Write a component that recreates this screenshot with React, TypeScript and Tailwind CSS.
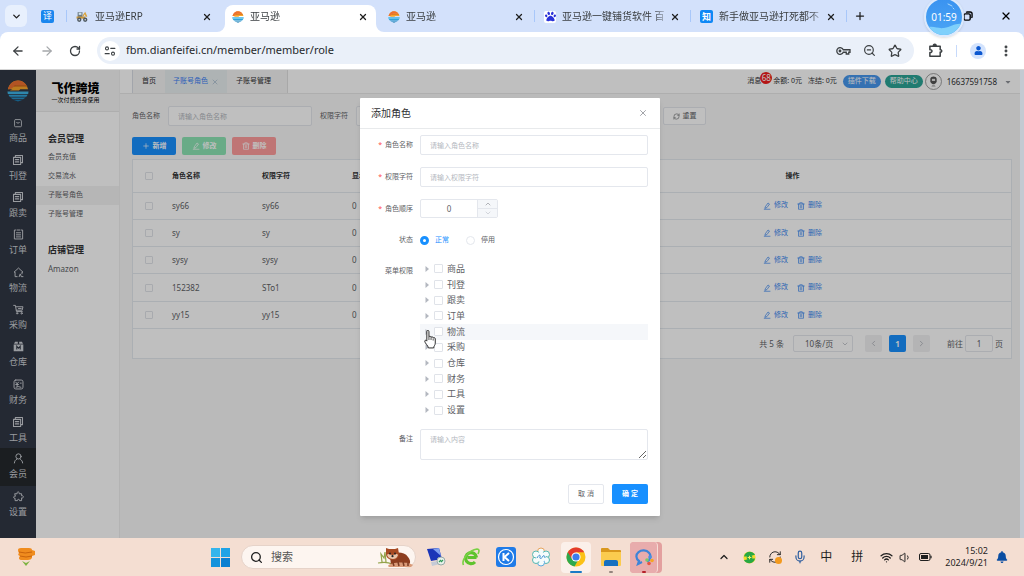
import { useState, type ReactNode } from 'react'
import {
  ArrowLeft,
  ArrowRight,
  ChevronDown,
  ChevronLeft,
  ChevronRight,
  ChevronUp,
  EllipsisVertical,
  Mic,
  Plus,
  RefreshCw,
  RotateCw,
  Search,
  Star,
  Volume1,
  Wifi,
  X,
  ZoomOut,
} from 'lucide-react'
import { FaBell, FaCaretDown, FaPaw, FaUser } from 'react-icons/fa'

type IconProps = { className?: string }

const Line = ({ className, children }: IconProps & { children: ReactNode }) => (
  <svg
    viewBox="0 0 16 16"
    className={className}
    fill="none"
    stroke="currentColor"
    strokeWidth="1.4"
    strokeLinecap="round"
    strokeLinejoin="round"
    aria-hidden="true"
  >
    {children}
  </svg>
)

const BrandIcon = ({ className }: IconProps) => (
  <svg viewBox="0 0 24 24" className={className} aria-hidden="true">
    <path d="M1 10C2.500 4 7 .5 12 .5S21.500 4 23 10h-8.500l-1.500 1.500H3l3-1.500z" fill="#f7a62a" />
    <path d="M1 10C2.500 4 7 .5 12 .5c4 0 7 2 9 5H10L4.500 9.500z" fill="#ee7130" />
    <path d="M8.500 5.800h13l.8 1.200h-15z" fill="#c85a1e" />
    <path d="M.5 12.500h23l-.4 2.800H.9z" fill="#3fb4e6" />
    <path d="M1.500 16h21l-1.400 2.300H2.900z" fill="#2fa3da" />
    <path d="M3.600 19h16.800l-2.800 2H6.400z" fill="#2490c8" />
    <path d="M7.500 21.700h9L12 23.500z" fill="#1d7bb0" />
  </svg>
)

const DiggerIcon = () => (
  <svg viewBox="0 0 24 24" className="h-[13px] w-[13px] shrink-0" aria-hidden="true">
    <path d="M3 4h9v9H3z" fill="#6d7c86" />
    <path d="M5 5h5v4H5z" fill="#cfe3ee" />
    <path d="M12 10l5-7 4 9-3 1-2-5-2 4z" fill="#d9a441" />
    <path d="M1 12h16v4H1z" fill="#c8953a" />
    <circle cx="6" cy="18" r="4" fill="#4f5a62" />
    <circle cx="6" cy="18" r="1.500" fill="#d5d9dc" />
    <circle cx="17" cy="18" r="4" fill="#4f5a62" />
    <circle cx="17" cy="18" r="1.500" fill="#d5d9dc" />
  </svg>
)

const EditIcon = ({ className }: IconProps) => (
  <Line className={className}>
    <path d="M5 9l5-7 3 2-5 7-3.500 1.500zM2.500 14.500h11.500" />
  </Line>
)

const TrashIcon = ({ className }: IconProps) => (
  <Line className={className}>
    <path d="M1.500 4h13M5.500 4V1.500h5V4M3 4v10.500h10V4M6.500 7v4.500M9.500 7v4.500" />
  </Line>
)

const SheetsIcon = ({ className }: IconProps) => (
  <Line className={className}>
    <path d="M4.500 4V2H14v9.500h-2M2 4.500h9.500V14H2zM4.500 7.500h4.500M4.500 10.500h4.500" />
  </Line>
)

const NAV: { label: string; icon: ReactNode }[] = [
  {
    label: '商品',
    icon: (
      <Line className="h-[10px] w-[10px]">
        <path d="M4 2.500h8l1.500 2.500v7.500a1.500 1.500 0 0 1-1.500 1.500H4a1.500 1.500 0 0 1-1.500-1.500V5zM5.500 7c1 1.800 4 1.800 5 0" />
      </Line>
    ),
  },
  { label: '刊登', icon: <SheetsIcon className="h-3 w-3" /> },
  { label: '跟卖', icon: <SheetsIcon className="h-3 w-3" /> },
  {
    label: '订单',
    icon: (
      <Line className="h-[11px] w-[11px]">
        <path d="M4 1.500H2v13h12v-13h-2M6 1.500h4M5 5.500h6M5 8.500h6M5 11.500h6" />
      </Line>
    ),
  },
  {
    label: '物流',
    icon: (
      <Line className="h-[11px] w-[11px]">
        <path d="M6 14H3V7.500H1.500L8 1.500l6.500 6H13V10M9 14l1.500-4 1.500 4h2.500" />
      </Line>
    ),
  },
  {
    label: '采购',
    icon: (
      <Line className="h-[11px] w-[11px]">
        <path d="M1 2h2.500l1.500 9h8.500M4.500 4H14.500l-1.200 5H5M8 6.500h4" />
        <circle cx="6" cy="13.500" r="1" />
        <circle cx="12.500" cy="13.500" r="1" />
      </Line>
    ),
  },
  {
    label: '仓库',
    icon: (
      <svg viewBox="0 0 16 16" className="h-[11px] w-[11px]" aria-hidden="true">
        <path d="M3 1h4v3H1.500zM9 1h4l1.500 3H9zM1 5h14v10H1z" fill="currentColor" />
        <path d="M5.500 12.500v-5l2.500 3 2.500-3v5" fill="none" stroke="#313744" strokeWidth="1.500" />
      </svg>
    ),
  },
  {
    label: '财务',
    icon: (
      <Line className="h-[11px] w-[11px]">
        <rect x="1.500" y="1.500" width="13" height="13" rx="2.500" />
        <path d="M4 4.500l2 2.500 2-2.500M4 8h4M6 7v3.500M10.500 6h1.500M4.500 12l3-1 4 1" />
      </Line>
    ),
  },
  { label: '工具', icon: <SheetsIcon className="h-3 w-3" /> },
  {
    label: '会员',
    icon: (
      <Line className="h-[11px] w-[11px]">
        <circle cx="8" cy="5" r="3.800" />
        <path d="M2 14.500c.3-3 1.500-4.500 3.500-5.500M11 9.500c1.800 1 2.700 2.500 3 5" />
      </Line>
    ),
  },
  {
    label: '设置',
    icon: (
      <Line className="h-[11px] w-[11px]">
        <path d="M3 4h3c-1-3.500 4-3.500 3 0h3.500v3c3.500-1 3.500 4 0 3v4H9.500c.5-2.500-3.500-2.500-3 0H3v-3.500c-3 .5-3-3.500 0-3z" />
      </Line>
    ),
  },
]

const TABS: { title: string; icon: ReactNode; active?: boolean; divider?: boolean }[] = [
  { title: '亚马逊ERP', icon: <DiggerIcon />, divider: true },
  { title: '亚马逊', icon: <BrandIcon className="h-3 w-3 shrink-0" />, active: true },
  { title: '亚马逊', icon: <BrandIcon className="h-3 w-3 shrink-0" /> },
  {
    title: '亚马逊一键铺货软件 百',
    icon: (
      <span className="flex h-3 w-3 shrink-0 items-center justify-center rounded-xs bg-white">
        <FaPaw className="h-[11px] w-[11px] text-[#2b32d8]" />
      </span>
    ),
    divider: true,
  },
  {
    title: '新手做亚马逊打死都不',
    icon: (
      <span className="flex h-[13px] w-[13px] shrink-0 items-center justify-center rounded-xs bg-[#0e88f5] text-[9px] font-bold text-white">
        知
      </span>
    ),
    divider: true,
  },
]

const ROLES = [
  { name: 'sy66', key: 'sy66' },
  { name: 'sy', key: 'sy' },
  { name: 'sysy', key: 'sysy' },
  { name: '152382', key: 'STo1' },
  { name: 'yy15', key: 'yy15' },
]

const MENUS = ['商品', '刊登', '跟卖', '订单', '物流', '采购', '仓库', '财务', '工具', '设置']

const CheckBox = ({ label, className = 'h-2 w-2' }: { label: string; className?: string }) => (
  <input
    type="checkbox"
    aria-label={label}
    className={`block shrink-0 appearance-none rounded-[1px] border border-[#e0e3e9] bg-white checked:border-[#1890ff] checked:bg-[#1890ff] ${className}`}
  />
)

const BrowserTabs = () => (
  <div className="relative flex h-8 shrink-0 items-center bg-[#d3e1fb] pl-[5px] text-[10px] text-[#3c4043]">
    <button
      type="button"
      aria-label="搜索标签页"
      className="flex h-[22px] w-[22px] items-center justify-center rounded-md bg-[#e8f0fd] text-[#1f1f1f]"
    >
      <ChevronDown className="h-[11px] w-[11px]" strokeWidth={3} />
    </button>
    <span className="ml-[14px] mr-3 flex h-[13px] w-[13px] items-center justify-center rounded-xs bg-[#1a86ee] text-[9px] text-white">
      译
    </span>
    {TABS.map((tab, i) => (
      <div key={i} className="flex h-full w-[156px] items-center">
        <span className={`h-3 w-px shrink-0 ${tab.divider ? 'bg-[#a8c7fa]' : ''}`} />
        <div
          className={`relative mx-[2px] flex h-[27px] min-w-0 flex-1 items-center self-end pb-1 pl-[7px] pr-2 ${
            tab.active ? 'rounded-t-lg bg-white' : ''
          }`}
        >
          {tab.active && (
            <>
              <svg viewBox="0 0 8 8" className="absolute -left-2 bottom-0 h-2 w-2" aria-hidden="true">
                <path d="M8 0v8H0a8 8 0 0 0 8-8z" fill="#fff" />
              </svg>
              <svg viewBox="0 0 8 8" className="absolute -right-2 bottom-0 h-2 w-2" aria-hidden="true">
                <path d="M0 0v8h8a8 8 0 0 1-8-8z" fill="#fff" />
              </svg>
            </>
          )}
          {tab.icon}
          <span className="ml-[6px] flex-1 whitespace-nowrap [mask-image:linear-gradient(to_right,#000_85%,transparent)]">
            {tab.title}
          </span>
          <button type="button" aria-label="关闭标签页" className="text-[#1f1f1f]">
            <X className="h-[10px] w-[10px]" strokeWidth={3} />
          </button>
        </div>
      </div>
    ))}
    <span className="h-3 w-px bg-[#a8c7fa]" />
    <button type="button" aria-label="新标签页" className="ml-[7px] text-[#1f1f1f]">
      <Plus className="h-3 w-3" strokeWidth={2.5} />
    </button>
    <div className="ml-auto flex items-center gap-[27px] pr-3 text-black">
      <button type="button" aria-label="还原窗口">
        <svg viewBox="0 0 16 16" className="h-[10px] w-[10px]" fill="none" stroke="currentColor" strokeWidth="2.2" aria-hidden="true">
          <rect x="1.500" y="4.500" width="10" height="10" rx="2" />
          <path d="M5 2.500q1-1 2-1h4.500q3 0 3 3V9q0 1-1 2" />
        </svg>
      </button>
      <button type="button" aria-label="关闭窗口">
        <X className="h-3 w-3" strokeWidth={2.5} />
      </button>
    </div>
    {/* Recording timer */}
    <div className="absolute -top-[3px] right-[60px] z-10 flex h-10 w-10 items-center justify-center overflow-hidden rounded-full border-2 border-[#dbe9fc] bg-gradient-to-b from-[#3a93f0] to-[#4aa5f5] text-[10px] text-white shadow">
      <svg viewBox="0 0 36 36" className="absolute inset-0 h-full w-full" aria-hidden="true">
        <path d="M0 29c7-3 11 1 18 0s11-5 18-4v11H0z" fill="#7fd0fb" />
        <path d="M22 5l4 2M27 9l1 1" stroke="#a8d8fb" strokeLinecap="round" />
      </svg>
      <span className="relative">01:59</span>
    </div>
  </div>
)

const AddressBar = () => (
  <div className="shrink-0 bg-[#d3e1fb]">
    <div className="flex h-[38px] items-center rounded-t-lg border-b border-[#d5d5d5] bg-white text-[#3c4043]">
      <div className="flex w-[97px] items-center gap-[15px] pl-[11px]">
        <button type="button" aria-label="后退">
          <ArrowLeft className="h-[14px] w-[14px]" strokeWidth={2.2} />
        </button>
        <button type="button" aria-label="前进" className="text-[#a5a8ab]">
          <ArrowRight className="h-[14px] w-[14px]" strokeWidth={2.2} />
        </button>
        <button type="button" aria-label="刷新">
          <RotateCw className="h-3 w-3" strokeWidth={2.6} />
        </button>
      </div>
      <div className="flex h-[27px] flex-1 items-center rounded-full bg-[#eaf0f9] pl-[3px] pr-3">
        <span className="flex h-[20px] w-[20px] items-center justify-center rounded-full bg-white">
          <Line className="h-3 w-3">
            <circle cx="4" cy="4.500" r="2" />
            <path d="M9 4.500h5.500M1.500 11.500H7" />
            <circle cx="12" cy="11.500" r="2" />
          </Line>
        </span>
        <input
          aria-label="地址"
          defaultValue="fbm.dianfeifei.cn/member/member/role"
          className="ml-[6px] min-w-0 flex-1 bg-transparent text-[11px] text-[#27292c] outline-none"
        />
        <div className="flex items-center gap-3">
          <svg viewBox="0 0 30 16" className="h-2 w-[15px]" fill="none" stroke="currentColor" strokeWidth="2.600" aria-hidden="true">
            <path d="M14.500 5.500H28v5h-2.500V14h-5v-3.500h-6A6.700 6.700 0 1 1 14.500 5.500z" />
            <circle cx="8" cy="8" r="1.600" fill="currentColor" />
          </svg>
          <ZoomOut className="h-[13px] w-[13px]" strokeWidth={2.2} />
          <Star className="h-[14px] w-[14px]" strokeWidth={2.2} />
        </div>
      </div>
      <div className="flex items-center gap-[13px] pl-[14px] pr-[11px]">
        <svg viewBox="0 0 16 16" className="h-[15px] w-[15px]" fill="none" stroke="currentColor" strokeWidth="1.600" strokeLinejoin="round" aria-hidden="true">
          <path d="M2 3.500h11v3.800c2.200-.6 2.200 3 0 2.400v4.300H2v-4c3 .3 3-3.200 0-2.900z" />
          <path d="M5.800 3.300c-.8-2.800 3.600-2.800 2.800 0z" fill="currentColor" />
        </svg>
        <span className="h-3 w-px bg-[#c7dafb]" />
        <span className="flex h-4 w-4 items-center justify-center rounded-full bg-[#d3e3fd] text-[#0b57d0]">
          <FaUser className="h-[9px] w-[9px]" />
        </span>
        <button type="button" aria-label="菜单">
          <EllipsisVertical className="h-[14px] w-[14px]" strokeWidth={3} />
        </button>
      </div>
    </div>
  </div>
)

const SideMenu = () => (
  <>
    <nav className="w-9 shrink-0 bg-[#313744] text-[9px] leading-3 text-[#cdd0d6]">
      <div className="flex h-[42px] items-center justify-center">
        <BrandIcon className="h-[22px] w-[22px]" />
      </div>
      <div className="flex h-[411px] flex-col">
        {NAV.map((item) => (
          <a
            key={item.label}
            href="#"
            className={`flex flex-1 flex-col items-center justify-center gap-1 ${
              item.label === '会员' ? 'bg-[#24292c]' : ''
            }`}
          >
            {item.icon}
            <span>{item.label}</span>
          </a>
        ))}
      </div>
    </nav>
    <aside className="w-[84px] shrink-0 border-r border-[#efefef] bg-white text-[7px] text-[#606266]">
      <div className="flex h-[42px] flex-col items-center border-b border-[#e8e8e8] bg-[#f6f6f6] pr-1 pt-[13px] text-black">
        <span className="text-[12px] font-black leading-[12px]">飞作跨境</span>
        <span className="pt-[2px] text-[6px] leading-[6px]">一次付费终身使用</span>
      </div>
      <div className="flex flex-col pt-[18px]">
        <h2 className="flex h-[18px] items-center pl-3 text-[9px] font-bold text-[#303133]">会员管理</h2>
        {['会员充值', '交易流水', '子账号角色', '子账号管理'].map((label) => (
          <a
            key={label}
            href="#"
            className={`flex h-[19px] items-center pl-3 ${label === '子账号角色' ? 'bg-[#f3f3f3]' : ''}`}
          >
            {label}
          </a>
        ))}
        <h2 className="mt-[17px] flex h-[18px] items-center pl-3 text-[9px] font-bold text-[#303133]">店铺管理</h2>
        <a href="#" className="flex h-[19px] items-center pl-3 text-[8px]">
          Amazon
        </a>
      </div>
    </aside>
  </>
)

const TopBar = () => (
  <header className="flex h-6 shrink-0 items-center border-b border-[#e8e8e8] bg-white pl-3 text-[7px] text-[#303133]">
    <div className="flex h-full border-l border-[#d8dce5]">
      <a href="#" className="flex w-8 items-center justify-center bg-[#f4f4f4]">
        首页
      </a>
      <div className="flex w-[62px] items-center justify-center gap-[3px] bg-[#e9eff1] text-[#3a7ff5]">
        <a href="#">子账号角色</a>
        <button type="button" aria-label="关闭" className="text-[#9db4c8]">
          <X className="h-2 w-2" />
        </button>
      </div>
      <a href="#" className="flex w-[61px] items-center border-r border-[#e0e0e0] bg-[#f4f4f4] pl-[9px]">
        子账号管理
      </a>
    </div>
    <div className="ml-auto flex items-center pr-2">
      <span className="relative mr-3">
        消息
        <span className="absolute -right-[11px] -top-1 flex h-3 w-3 items-center justify-center rounded-full bg-[#f01c1c] text-[8px] text-white">
          68
        </span>
      </span>
      <span className="mr-[6px]">余额: 0元</span>
      <span className="mr-[6px]">冻结: 0元</span>
      <button type="button" className="mr-1 h-[13px] rounded-full bg-[#4797ee] px-[5px] text-white">
        插件下载
      </button>
      <button type="button" className="mr-[2px] h-[13px] rounded-full bg-[#2ba496] px-[5px] text-white">
        帮助中心
      </button>
      <svg viewBox="0 0 32 32" className="mr-[5px] h-[17px] w-[17px]" aria-hidden="true">
        <circle cx="16" cy="16" r="15" fill="#fff" stroke="#888" strokeWidth="1.500" />
        <path d="M10 11c1-6 11-6 12 0v5c-2 7-10 7-12 0z" fill="#555" />
        <path d="M13 11h6v4h-6z" fill="#e6e6e6" />
        <path d="M12 26h8l-2-4h-4z" fill="#bbb" />
      </svg>
      <span className="text-[8px]">16637591758</span>
      <FaCaretDown className="ml-[7px] h-2 w-2 text-[#909399]" />
    </div>
  </header>
)

const RolePage = () => (
  <main className="flex min-w-0 flex-1 flex-col bg-[#f8f8f8] text-[7px] text-[#606266]">
    <TopBar />
    <div className="flex flex-col pl-3 pr-2 pt-3">
      <form className="flex h-5 items-center">
        <label htmlFor="search-name" className="mr-2">
          角色名称
        </label>
        <input
          id="search-name"
          placeholder="请输入角色名称"
          className="mr-2 h-5 w-36 rounded-xs border border-[#e4e7ed] bg-white px-[9px] placeholder:text-[#b4b8c0]"
        />
        <label htmlFor="search-key" className="mr-2">
          权限字符
        </label>
        <input id="search-key" className="mr-2 h-5 w-[299px] rounded-xs border border-[#e4e7ed] bg-white px-[9px]" />
        <button
          type="reset"
          className="flex h-[18px] w-[43px] items-center justify-center gap-[3px] rounded-xs border border-[#e4e7ed] bg-white"
        >
          <RefreshCw className="h-[7px] w-[7px]" />
          重置
        </button>
      </form>
      <div className="mt-[11px] flex gap-[6px] font-bold text-white">
        <button type="button" className="flex h-[18px] w-11 items-center justify-center gap-[3px] rounded-xs bg-[#1890ff]">
          <Plus className="h-2 w-2" />
          新增
        </button>
        <button type="button" className="flex h-[18px] w-11 items-center justify-center gap-[3px] rounded-xs bg-[#8ce4b4]">
          <EditIcon className="h-2 w-2" />
          修改
        </button>
        <button type="button" className="flex h-[18px] w-11 items-center justify-center gap-[3px] rounded-xs bg-[#ff9c9c]">
          <TrashIcon className="h-2 w-2" />
          删除
        </button>
      </div>
      <div className="mt-1 border border-[#e4eaef] bg-white">
        <table className="h-[169px] w-full table-fixed">
          <colgroup>
            <col className="w-8" />
            <col className="w-[90px]" />
            <col className="w-[90px]" />
            <col />
            <col className="w-1/2" />
          </colgroup>
          <thead>
            <tr className="h-8 border-b border-[#e4eaef] text-left text-[#303133]">
              <th className="pl-3">
                <CheckBox label="全选" />
              </th>
              <th className="pl-[7px]">角色名称</th>
              <th className="pl-[7px]">权限字符</th>
              <th className="pl-[7px]">显示顺序</th>
              <th className="pl-[2px] text-center">操作</th>
            </tr>
          </thead>
          <tbody>
            {ROLES.map((role) => (
              <tr key={role.name} className="h-[27px] border-b border-[#e4eaef]">
                <td className="pl-3">
                  <CheckBox label={role.name} />
                </td>
                <td className="pl-[7px] text-[8px]">{role.name}</td>
                <td className="pl-[7px] text-[8px]">{role.key}</td>
                <td className="pl-[7px] text-[8px]">0</td>
                <td className="pl-[2px] text-[#3a86f0]">
                  <div className="flex justify-center gap-[9px]">
                    <button type="button" className="flex items-center gap-[3px]">
                      <EditIcon className="h-2 w-2" />
                      修改
                    </button>
                    <button type="button" className="flex items-center gap-[3px]">
                      <TrashIcon className="h-2 w-2" />
                      删除
                    </button>
                  </div>
                </td>
              </tr>
            ))}
          </tbody>
        </table>
        <div className="flex h-[29px] items-center justify-end pr-2 text-[8px]">
          <span className="mr-[9px]">共 5 条</span>
          <span className="relative mr-3">
            <select
              aria-label="每页条数"
              className="h-[17px] w-[60px] appearance-none rounded-xs border border-[#e4e7ed] bg-white pl-[11px]"
            >
              <option>10条/页</option>
            </select>
            <ChevronDown className="pointer-events-none absolute right-1 top-[5px] h-2 w-2 text-[#a8abb2]" />
          </span>
          <button
            type="button"
            aria-label="上一页"
            className="mr-[7px] flex h-[17px] w-[17px] items-center justify-center rounded-xs bg-[#f0f0f2] text-[#a8abb2]"
          >
            <ChevronLeft className="h-[9px] w-[9px]" />
          </button>
          <button type="button" className="mr-[7px] h-[17px] w-[17px] rounded-xs bg-[#1890ff] font-bold text-white">
            1
          </button>
          <button
            type="button"
            aria-label="下一页"
            className="mr-[17px] flex h-[17px] w-[17px] items-center justify-center rounded-xs bg-[#f0f0f2] text-[#a8abb2]"
          >
            <ChevronRight className="h-[9px] w-[9px]" />
          </button>
          <label className="flex items-center gap-[2px]">
            前往
            <input
              defaultValue="1"
              className="h-[17px] w-7 rounded-xs border border-[#e4e7ed] bg-white text-center"
            />
            页
          </label>
        </div>
      </div>
    </div>
  </main>
)

const FieldLabel = ({ htmlFor, required, children }: { htmlFor?: string; required?: boolean; children: ReactNode }) => (
  <label htmlFor={htmlFor} className="w-[60px] shrink-0 pr-[7px] text-right leading-5">
    {required && <span className="mr-[3px] text-[#ff4949]">*</span>}
    {children}
  </label>
)

const RoleDialog = () => {
  const [status, setStatus] = useState('正常')
  const [order, setOrder] = useState(0)

  return (
    <section
      role="dialog"
      aria-label="添加角色"
      className="w-[300px] rounded-[1px] bg-white text-[7px] text-[#606266] shadow-md"
    >
      <div className="flex h-[31px] items-center justify-between border-b border-[#e8eaec] pl-[11px] pr-3">
        <h1 className="text-[10px] text-[#303133]">添加角色</h1>
        <button type="button" aria-label="关闭" className="text-[#909399]">
          <X className="h-[10px] w-[10px]" strokeWidth={2} />
        </button>
      </div>
      <form className="flex flex-col pb-3 pr-3 pt-[6px]" onSubmit={(e) => e.preventDefault()}>
        <div className="mb-3 flex">
          <FieldLabel htmlFor="role-name" required>
            角色名称
          </FieldLabel>
          <input
            id="role-name"
            placeholder="请输入角色名称"
            className="h-5 min-w-0 flex-1 rounded-xs border border-[#e4e7ed] px-[9px] placeholder:text-[#b4b8c0]"
          />
        </div>
        <div className="mb-3 flex">
          <FieldLabel htmlFor="role-key" required>
            权限字符
          </FieldLabel>
          <input
            id="role-key"
            placeholder="请输入权限字符"
            className="h-5 min-w-0 flex-1 rounded-xs border border-[#e4e7ed] px-[9px] placeholder:text-[#b4b8c0]"
          />
        </div>
        <div className="mb-[11px] flex">
          <FieldLabel htmlFor="role-sort" required>
            角色顺序
          </FieldLabel>
          <div className="flex h-[19px] w-[78px] overflow-hidden rounded-xs border border-[#e4e7ed]">
            <input
              id="role-sort"
              value={order}
              onChange={(e) => setOrder(Number(e.target.value) || 0)}
              className="min-w-0 flex-1 text-center text-[8px]"
            />
            <div className="flex w-5 flex-col border-l border-[#e4e7ed] bg-[#f5f7fa] text-[#909399]">
              <button
                type="button"
                aria-label="增加"
                onClick={() => setOrder(order + 1)}
                className="flex flex-1 items-center justify-center border-b border-[#e4e7ed]"
              >
                <ChevronUp className="h-2 w-2" />
              </button>
              <button
                type="button"
                aria-label="减少"
                onClick={() => setOrder(Math.max(0, order - 1))}
                className="flex flex-1 items-center justify-center text-[#c0c4cc]"
              >
                <ChevronDown className="h-2 w-2" />
              </button>
            </div>
          </div>
        </div>
        <div className="mb-[11px] flex">
          <FieldLabel>状态</FieldLabel>
          <div className="flex items-center gap-[17px]">
            {['正常', '停用'].map((option) => (
              <label
                key={option}
                className={`flex items-center gap-[6px] ${status === option ? 'text-[#1890ff]' : ''}`}
              >
                <input
                  type="radio"
                  name="status"
                  checked={status === option}
                  onChange={() => setStatus(option)}
                  className="h-[9px] w-[9px] appearance-none rounded-full border border-[#e4e7ed] bg-white checked:border-[3px] checked:border-[#1890ff]"
                />
                {option}
              </label>
            ))}
          </div>
        </div>
        <div className="mb-[11px] flex">
          <FieldLabel>菜单权限</FieldLabel>
          <ul className="flex h-[157px] min-w-0 flex-1 flex-col text-[9px] leading-3">
            {MENUS.map((menu) => (
              <li
                key={menu}
                className={`relative flex flex-1 items-center pl-[5px] ${menu === '物流' ? 'bg-[#f5f7fa]' : ''}`}
              >
                <svg viewBox="0 0 4 6" className="mr-[5px] h-[6px] w-1" aria-hidden="true">
                  <path d="M.5 0v6l3.500-3z" fill="#b4b8c0" />
                </svg>
                <label className="flex items-center gap-1">
                  <CheckBox label={menu} className="h-[9px] w-[9px]" />
                  {menu}
                </label>
                {menu === '物流' && (
                  <svg viewBox="0 0 22 36" className="absolute left-1 top-[6px] z-10 h-[19px] w-3" aria-hidden="true">
                    <path
                      d="M5 3c0-3 4-3 4 0v10c1-2 4-1 4 1 1-2 4-1 4 1 1-1 4-1 4 2v8c0 4-3 5-3 9H8c0-4-7-9-7-13 0-2 3-2 4 0z"
                      fill="#fff"
                      stroke="#222"
                      strokeWidth="1.800"
                    />
                    <path d="M9 13v6M13 14v5M17 16v4" fill="none" stroke="#222" strokeWidth="1.500" />
                  </svg>
                )}
              </li>
            ))}
          </ul>
        </div>
        <div className="mb-6 flex">
          <FieldLabel htmlFor="role-remark">备注</FieldLabel>
          <textarea
            id="role-remark"
            placeholder="请输入内容"
            className="block h-[31px] min-w-0 flex-1 rounded-xs border border-[#e4e7ed] px-[9px] py-1 leading-3 placeholder:text-[#b4b8c0]"
          />
        </div>
        <div className="flex justify-end gap-2">
          <button type="button" className="h-5 w-9 rounded-xs border border-[#e4e7ed]">
            取 消
          </button>
          <button type="submit" className="h-5 w-9 rounded-xs bg-[#1890ff] font-bold text-white">
            确 定
          </button>
        </div>
      </form>
    </section>
  )
}

const RedPanda = () => (
  <svg viewBox="0 0 36 20" className="h-5 w-9" aria-hidden="true">
    <path d="M1 16c6-1 10-1 14 1M5 15L4 7l3 4 1-6 1 10" fill="none" stroke="#93a34a" strokeWidth="1.200" />
    <path d="M13 8c4-3 14-4 18 2 4 5 2 9-3 9H14z" fill="#8c3d1f" />
    <path d="M11 19c1-4 20-5 25-1l-2 2H12z" fill="#d99a78" />
    <path d="M16 16l1 3M21 15l1 4M26 15l1 4M31 16v3" stroke="#7a3a22" strokeWidth="1.500" />
    <path d="M9 1l3 1h6l3-1 1 6c0 4-3 6-6 6s-7-2-7-6z" fill="#a64a22" />
    <path d="M10 8c1-2 3 0 5.500 0S20 6 21 8c-1 3-3 4-5 4s-5-1-6-4z" fill="#e9c5aa" />
    <circle cx="13" cy="6.500" r=".9" fill="#222" />
    <circle cx="18" cy="6.500" r=".9" fill="#222" />
    <circle cx="15.500" cy="9.200" r="1.100" fill="#222" />
  </svg>
)

const TaskBar = () => (
  <footer className="flex h-[38px] shrink-0 items-center bg-[#f4ded2] text-[#1f1f1f]">
    <svg viewBox="0 0 20 20" className="ml-4 h-5 w-5" aria-hidden="true">
      <path d="M2 3q0-2 3-2h8q3 0 3 2l3 1v4l-3 1v2q-1 2-4 2H6q-3 0-3-2 0-1 1-2-3-1-1-3-1-1-1-3z" fill="#f08c1e" />
      <path d="M3 5q6 2 13 0M4 9q6 2 12 0" stroke="#c9640c" fill="none" />
      <path d="M6 14l4 2 4-2-4 5z" fill="#7cb342" />
    </svg>
    <div className="ml-[175px] flex items-center">
      <button type="button" aria-label="开始" className="grid h-[19px] w-[19px] grid-cols-2 gap-px">
        <span className="bg-[#36b5ec]" />
        <span className="bg-[#1fa3e6]" />
        <span className="bg-[#1593dc]" />
        <span className="bg-[#0a7fd1]" />
      </button>
      <label className="ml-[11px] flex h-6 w-[175px] items-center rounded-full border border-[#e6d3c9] bg-[#fdf5f0] pl-2 pr-[2px]">
        <Search className="h-[13px] w-[13px] shrink-0" strokeWidth={2.4} />
        <input
          aria-label="搜索"
          placeholder="搜索"
          className="ml-2 min-w-0 flex-1 bg-transparent text-[11px] outline-none placeholder:text-[#555]"
        />
        <RedPanda />
      </label>
    </div>
    <div className="ml-[10px] flex items-center">
      <svg viewBox="0 0 20 20" className="mr-[15px] h-5 w-5" aria-hidden="true">
        <path d="M1 2l12-1 3 11-11 2z" fill="#1a35b8" />
        <path d="M7 2l6-1 2 8z" fill="#7fa0f0" />
        <path d="M5 15l8-1 1 3-8 2z" fill="#c5cad6" />
        <circle cx="15" cy="14" r="4" fill="#e8f0ea" stroke="#9aa" />
        <path d="M13 15l2-2M15 15l2-2" stroke="#2e9b57" strokeWidth="1.200" />
      </svg>
      <svg viewBox="0 0 20 20" className="mr-[15px] h-5 w-5" aria-hidden="true">
        <path d="M15.500 10.500H6.500M15.500 10.500a5.500 5.500 0 1 0-1.500 4.500" fill="none" stroke="#5fc32e" strokeWidth="3.200" />
        <path d="M2.500 18C0 13 8 3 16 2c3 0 2 3 1 5" fill="none" stroke="#79d143" strokeWidth="1.600" />
      </svg>
      <svg viewBox="0 0 20 20" className="mr-[15px] h-5 w-5" aria-hidden="true">
        <rect width="20" height="20" rx="3" fill="#1f7be8" />
        <circle cx="10" cy="10" r="7.500" fill="none" stroke="#fff" strokeWidth="1.200" />
        <path d="M7.500 6v8M13 6l-4.500 4 4.500 4" fill="none" stroke="#fff" strokeWidth="2" />
      </svg>
      <svg viewBox="0 0 20 20" className="mr-[10px] h-5 w-5" aria-hidden="true">
        <g fill="#f5fbfb" strokeWidth="1">
          <circle cx="10" cy="4.500" r="3.500" stroke="#e8a35c" />
          <circle cx="15" cy="7.500" r="3.500" stroke="#54b8b0" />
          <circle cx="15" cy="13" r="3.500" stroke="#54b8b0" />
          <circle cx="10" cy="15.500" r="3.500" stroke="#58a8e0" />
          <circle cx="5" cy="13" r="3.500" stroke="#54b8b0" />
          <circle cx="5" cy="7.500" r="3.500" stroke="#54b8b0" />
        </g>
        <circle cx="10" cy="10" r="5" fill="#f5fbfb" />
        <path d="M6 11c2-4 4-3 3-1s2 2 3-1c1-1 2 0 2 2" fill="none" stroke="#3d8fd0" />
      </svg>
      <div className="relative mr-[10px] flex h-[31px] w-[30px] items-center justify-center rounded-sm bg-[#fbf0ea]">
        <svg viewBox="0 0 20 20" className="h-5 w-5" aria-hidden="true">
          <circle cx="10" cy="10" r="9.500" fill="#fbc116" />
          <path d="M10 10L1.800 5.200A9.500 9.500 0 0 0 8.500 19.400l4-7z" fill="#2da94f" />
          <path d="M1.800 5.200a9.500 9.500 0 0 1 16.400 0H10l-4 7z" fill="#e33b2e" />
          <circle cx="10" cy="10" r="4.600" fill="#fff" />
          <circle cx="10" cy="10" r="3.600" fill="#3b7ded" />
        </svg>
        <span className="absolute bottom-0 h-[2px] w-3 rounded-full bg-[#1a7ac6]" />
      </div>
      <div className="relative mr-[9px] flex h-[31px] w-5 items-center justify-center">
        <svg viewBox="0 0 20 18" className="h-[18px] w-5" aria-hidden="true">
          <path d="M0 1q0-1 1-1h6l2 2h10q1 0 1 1v4H0z" fill="#d9971d" />
          <path d="M0 4h20v13q0 1-1 1H1q-1 0-1-1z" fill="#fbcb4e" />
          <path d="M3 18v-4q0-2 2-2h10q2 0 2 2v4z" fill="#1670c0" />
        </svg>
        <span className="absolute bottom-0 h-[2px] w-1 rounded-full bg-[#94857e]" />
      </div>
      <div className="rounded-sm bg-[#e3a09f] pr-1">
        <div className="relative flex h-[31px] w-7 items-center justify-center rounded-sm border-r border-[#f6dcd6] bg-[#e8acac]">
          <svg viewBox="0 0 20 18" className="h-[18px] w-5" aria-hidden="true">
            <path d="M13 13.500A7 6 0 1 0 5 13l-1 3 4-2" fill="none" stroke="#3d84d8" strokeWidth="2.200" />
            <circle cx="16" cy="9" r="1.800" fill="#4a90e2" />
            <circle cx="18" cy="12.500" r="1.800" fill="#f5a623" />
            <circle cx="15" cy="15.500" r="1.800" fill="#e8543f" />
            <circle cx="13" cy="12" r="1.800" fill="#7bc96a" />
          </svg>
          <span className="absolute bottom-0 h-[2px] w-1 rounded-full bg-[#b5222a]" />
        </div>
      </div>
    </div>
    <div className="ml-auto flex items-center pr-4">
      <ChevronUp className="mr-[13px] h-3 w-3" strokeWidth={2.5} />
      <svg viewBox="0 0 14 14" className="mr-3 h-[13px] w-[13px]" aria-hidden="true">
        <circle cx="7" cy="7" r="6.500" fill="#f3dc2a" />
        <path d="M1 6C2 0 10-1 13 4l-4 1-5 1zM13 8c-1 6-9 7-12 2l4-1 5-1z" fill="#27a844" />
        <circle cx="7" cy="7" r="3" fill="#27a844" />
        <path d="M7 5v4M5 7h4" stroke="#f3ee6a" strokeWidth="1.200" />
      </svg>
      <span className="relative mr-[11px]">
        <RefreshCw className="h-[14px] w-[14px]" strokeWidth={1.6} />
        <span className="absolute bottom-0 right-0 h-[7px] w-[7px] rounded-full bg-[#f39a1e]" />
      </span>
      <Mic className="mr-[13px] h-[14px] w-[14px] text-[#2b5c9e]" />
      <span className="mr-[19px] text-[12px]">中</span>
      <span className="mr-[17px] text-[12px]">拼</span>
      <Wifi className="mr-[6px] h-[13px] w-[13px]" strokeWidth={2.4} />
      <Volume1 className="mr-[7px] h-[13px] w-[13px]" strokeWidth={1.8} />
      <svg viewBox="0 0 26 16" className="mr-[13px] h-2 w-[13px]" aria-hidden="true">
        <rect x="1" y="1" width="21" height="14" rx="3" fill="none" stroke="#1f1f1f" strokeWidth="2" />
        <rect x="4" y="4" width="14" height="8" fill="#1f1f1f" />
        <path d="M24 5.500v5" stroke="#1f1f1f" strokeWidth="2.500" />
      </svg>
      <div className="mr-2 text-right text-[9px] leading-3">
        <div>15:02</div>
        <div>2024/9/21</div>
      </div>
      <FaBell className="h-3 w-3 text-[#0b4ea2]" />
    </div>
  </footer>
)

export default function App() {
  return (
    <div className="flex h-screen flex-col overflow-hidden font-['Noto_Sans','Noto_Sans_CJK_SC',sans-serif]">
      <BrowserTabs />
      <AddressBar />
      <div className="flex min-h-0 flex-1 bg-[#c3cad2]">
        <div className="relative flex min-w-0 flex-1">
          <SideMenu />
          <RolePage />
          <div className="absolute inset-0 flex items-start justify-center bg-black/25 pt-7">
            <RoleDialog />
          </div>
        </div>
        <div className="w-1 shrink-0" />
      </div>
      <TaskBar />
    </div>
  )
}
